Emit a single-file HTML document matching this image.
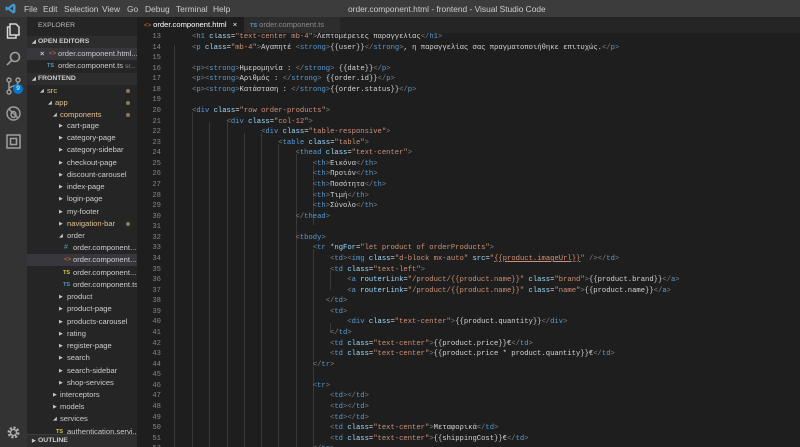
<!DOCTYPE html>
<html><head><meta charset="utf-8"><style>
*{margin:0;padding:0;box-sizing:border-box}
body{width:800px;height:447px;overflow:hidden;background:#1e1e1e;font-family:"Liberation Sans",sans-serif;position:relative}
.abs{position:absolute}
#title{left:0;top:0;width:800px;height:17px;background:#3c3c3c;color:#cccccc;font-size:8.4px}
#title span{position:absolute;top:4px}
#act{left:0;top:17px;width:27px;height:430px;background:#333333}
#side{left:27px;top:17px;width:110px;height:430px;background:#252526;color:#cccccc;font-size:7.6px}
.row{position:absolute;left:0;width:110px;height:12px;line-height:12px;white-space:nowrap;overflow:hidden}
.row span{position:absolute}
.mod{color:#e2c08d}
.dot{position:absolute;left:99px;top:4px;width:4px;height:4px;border-radius:2px;background:#8a7a5a}
.arr{font-size:5px;color:#c5c5c5}
#tabs{left:137px;top:17px;width:663px;height:16px;background:#252526}
#ed{left:137px;top:33px;width:663px;height:414px;overflow:hidden;background:#1e1e1e}
.ln{position:absolute;left:0;width:24px;text-align:right;color:#858585;font:7.2px "Liberation Mono",monospace}
.cd{position:absolute;left:55px;white-space:pre;tab-size:8;-moz-tab-size:8;color:#d4d4d4;font:7.2px "Liberation Mono","DejaVu Sans Mono",monospace}
.b{color:#808080}.n{color:#569cd6}.a{color:#9cdcfe}.s{color:#ce9178}
.g{position:absolute;width:1px;background:#3a3a3a}
</style></head><body>
<div id="title" class="abs">
<svg class="abs" style="left:5px;top:3px" width="11" height="11" viewBox="0 0 11 11"><path d="M8 0.5 L10.5 1.7 V9.3 L8 10.5 L3 6.5 L1.3 7.8 L0.5 7.3 V3.7 L1.3 3.2 L3 4.5 Z M8 3.2 L5 5.5 L8 7.8 Z" fill="#3c99d4"/></svg>
<span style="left:24px">File</span><span style="left:43px">Edit</span><span style="left:64px">Selection</span><span style="left:102px">View</span><span style="left:127px">Go</span><span style="left:145px">Debug</span><span style="left:176px">Terminal</span><span style="left:213px">Help</span>
<span style="left:348px">order.component.html - frontend - Visual Studio Code</span>
</div>
<div id="act" class="abs">
<svg class="abs" style="left:6px;top:6px" width="15" height="16" viewBox="0 0 15 16" fill="none" stroke="#d7d7d7" stroke-width="1.5"><path d="M4 1 H10 L13 4 V12 H4 Z"/><path d="M4 4 H1.5 V15 H10 V12"/></svg>
<svg class="abs" style="left:6px;top:34px" width="15" height="15" viewBox="0 0 15 15" fill="none" stroke="#a0a0a0" stroke-width="1.6"><circle cx="9" cy="6" r="4.5"/><path d="M5.8 9.2 L1 14"/></svg>
<svg class="abs" style="left:5px;top:60px" width="18" height="20" viewBox="0 0 18 20" fill="none" stroke="#a0a0a0" stroke-width="1.4"><circle cx="4" cy="3" r="2"/><circle cx="13" cy="3" r="2"/><circle cx="4" cy="15" r="2"/><path d="M4 5 V13 M13 5 C13 10 4 8 4 13"/></svg>
<div class="abs" style="left:13px;top:67px;width:10px;height:10px;border-radius:5px;background:#007acc;color:#fff;font-size:6.5px;text-align:center;line-height:10px">9</div>
<svg class="abs" style="left:6px;top:89px" width="15" height="15" viewBox="0 0 15 15" fill="none" stroke="#a0a0a0" stroke-width="1.4"><circle cx="7.5" cy="7.5" r="6.5"/><path d="M3 3 L12 12"/><ellipse cx="7.5" cy="8.5" rx="2.5" ry="3"/></svg>
<svg class="abs" style="left:6px;top:117px" width="15" height="15" viewBox="0 0 15 15" fill="none" stroke="#a0a0a0" stroke-width="1.5"><rect x="1" y="1" width="13" height="13"/><rect x="4.5" y="4.5" width="6" height="6"/></svg>
<svg class="abs" style="left:7px;top:409px" width="13" height="13" viewBox="0 0 13 13"><circle cx="6.5" cy="6.5" r="4.5" fill="none" stroke="#b0b0b0" stroke-width="3" stroke-dasharray="2 1.5"/><circle cx="6.5" cy="6.5" r="3" fill="none" stroke="#b0b0b0" stroke-width="1.3"/></svg>
</div>
<div id="side" class="abs">
<div class="row" style="top:3px"><span style="left:11px;font-size:6.8px;color:#bbbbbb">EXPLORER</span></div>
<div class="row" style="top:19px;background:#2d2d2e;font-weight:bold;font-size:6.8px"><span class="arr" style="left:5px">◢</span><span style="left:11px">OPEN EDITORS</span></div>
<div class="row" style="top:31px;background:#37373d"><span style="left:13px;font-weight:bold">×</span><span style="left:22px;color:#e37933;font-size:6px">&lt;&gt;</span><span style="left:31px">order.component.html...</span></div>
<div class="row" style="top:43px"><span style="left:20px;color:#519aba;font-size:5.5px;font-weight:bold">TS</span><span style="left:31px">order.component.ts <span style="position:static;color:#888;font-size:6.5px">sr...</span></span></div>
<div class="row" style="top:56px;background:#2d2d2e;font-weight:bold;font-size:6.8px"><span class="arr" style="left:5px">◢</span><span style="left:11px">FRONTEND</span></div>
<div class="row mod" style="top:68px"><span class="arr" style="left:13px">◢</span><span style="left:20px">src</span><i class="dot"></i></div>
<div class="row mod" style="top:80px"><span class="arr" style="left:21px">◢</span><span style="left:28px">app</span><i class="dot"></i></div>
<div class="row mod" style="top:92px"><span class="arr" style="left:26px">◢</span><span style="left:33px">components</span><i class="dot"></i></div>
<div class="row" style="top:103px"><span class="arr" style="left:32px">▶</span><span style="left:40px">cart-page</span></div>
<div class="row" style="top:115px"><span class="arr" style="left:32px">▶</span><span style="left:40px">category-page</span></div>
<div class="row" style="top:127px"><span class="arr" style="left:32px">▶</span><span style="left:40px">category-sidebar</span></div>
<div class="row" style="top:140px"><span class="arr" style="left:32px">▶</span><span style="left:40px">checkout-page</span></div>
<div class="row" style="top:152px"><span class="arr" style="left:32px">▶</span><span style="left:40px">discount-carousel</span></div>
<div class="row" style="top:164px"><span class="arr" style="left:32px">▶</span><span style="left:40px">index-page</span></div>
<div class="row" style="top:176px"><span class="arr" style="left:32px">▶</span><span style="left:40px">login-page</span></div>
<div class="row" style="top:189px"><span class="arr" style="left:32px">▶</span><span style="left:40px">my-footer</span></div>
<div class="row mod" style="top:201px"><span class="arr" style="left:32px">▶</span><span style="left:40px">navigation-bar</span><i class="dot"></i></div>
<div class="row" style="top:213px"><span class="arr" style="left:32px">◢</span><span style="left:40px">order</span></div>
<div class="row" style="top:225px"><span style="left:37px;color:#519aba;font-size:7px">#</span><span style="left:46px">order.component...</span></div>
<div class="row" style="top:237px;background:#37373d"><span style="left:37px;color:#e37933;font-size:6px">&lt;&gt;</span><span style="left:46px">order.component...</span></div>
<div class="row" style="top:250px"><span style="left:36px;color:#cbcb41;font-size:5.5px;font-weight:bold">TS</span><span style="left:46px">order.component...</span></div>
<div class="row" style="top:262px"><span style="left:36px;color:#519aba;font-size:5.5px;font-weight:bold">TS</span><span style="left:46px">order.component.ts</span></div>
<div class="row" style="top:274px"><span class="arr" style="left:32px">▶</span><span style="left:40px">product</span></div>
<div class="row" style="top:286px"><span class="arr" style="left:32px">▶</span><span style="left:40px">product-page</span></div>
<div class="row" style="top:299px"><span class="arr" style="left:32px">▶</span><span style="left:40px">products-carousel</span></div>
<div class="row" style="top:311px"><span class="arr" style="left:32px">▶</span><span style="left:40px">rating</span></div>
<div class="row" style="top:323px"><span class="arr" style="left:32px">▶</span><span style="left:40px">register-page</span></div>
<div class="row" style="top:335px"><span class="arr" style="left:32px">▶</span><span style="left:40px">search</span></div>
<div class="row" style="top:348px"><span class="arr" style="left:32px">▶</span><span style="left:40px">search-sidebar</span></div>
<div class="row" style="top:360px"><span class="arr" style="left:32px">▶</span><span style="left:40px">shop-services</span></div>
<div class="row" style="top:372px"><span class="arr" style="left:26px">▶</span><span style="left:33px">interceptors</span></div>
<div class="row" style="top:384px"><span class="arr" style="left:26px">▶</span><span style="left:33px">models</span></div>
<div class="row" style="top:396px"><span class="arr" style="left:26px">◢</span><span style="left:33px">services</span></div>
<div class="row" style="top:409px"><span style="left:29px;color:#cbcb41;font-size:5.5px;font-weight:bold">TS</span><span style="left:40px">authentication.servi...</span></div>
<div class="row" style="top:417px;height:13px;background:#2d2d2e;border-top:1px solid #3c3c3c;font-weight:bold;font-size:6.8px"><span class="arr" style="left:5px">▶</span><span style="left:11px">OUTLINE</span></div>
</div>
<div id="tabs" class="abs">
<div class="abs" style="left:0;top:0;width:107px;height:16px;background:#1e1e1e;color:#fff;font-size:7.6px;line-height:16px;white-space:nowrap"><span style="color:#e37933;font-size:6px;margin-left:7px">&lt;&gt;</span> order.component.html <span style="margin-left:4px">×</span></div>
<div class="abs" style="left:107px;top:0;width:96px;height:16px;background:#2d2d2d;color:#8a8a8a;font-size:7.6px;line-height:16px;white-space:nowrap"><span style="color:#519aba;font-size:5.5px;font-weight:bold;margin-left:6px">TS</span> order.component.ts</div>
</div>
<div id="ed" class="abs">
<div class="g" style="left:37px;top:12px;height:402px"></div>
<div class="g" style="left:55px;top:79px;height:335px"></div>
<div class="g" style="left:72px;top:89px;height:325px"></div>
<div class="g" style="left:90px;top:89px;height:325px"></div>
<div class="g" style="left:107px;top:100px;height:314px"></div>
<div class="g" style="left:124px;top:100px;height:314px"></div>
<div class="g" style="left:141px;top:111px;height:303px"></div>
<div class="g" style="left:159px;top:121px;height:293px"></div>
<div class="g" style="left:176px;top:132px;height:60px"></div>
<div class="g" style="left:176px;top:216px;height:198px"></div>
<div class="g" style="left:193px;top:237px;height:20px"></div>
<div class="g" style="left:193px;top:290px;height:10px"></div>
<div id="code"></div>
</div>
<script>
var L={
13:'<span class="b">&lt;</span><span class="n">h1</span> <span class="a">class</span>=<span class="s">"text-center mb-4"</span><span class="b">&gt;</span>Λεπτομέρειες παραγγελίας<span class="b">&lt;/</span><span class="n">h1</span><span class="b">&gt;</span>',
14:'<span class="b">&lt;</span><span class="n">p</span> <span class="a">class</span>=<span class="s">"mb-4"</span><span class="b">&gt;</span>Αγαπητέ <span class="b">&lt;</span><span class="n">strong</span><span class="b">&gt;</span>{{user}}<span class="b">&lt;/</span><span class="n">strong</span><span class="b">&gt;</span>, η παραγγελίας σας πραγματοποιήθηκε επιτυχώς.<span class="b">&lt;/</span><span class="n">p</span><span class="b">&gt;</span>',
15:'',
16:'<span class="b">&lt;</span><span class="n">p</span><span class="b">&gt;&lt;</span><span class="n">strong</span><span class="b">&gt;</span>Ημερομηνία : <span class="b">&lt;/</span><span class="n">strong</span><span class="b">&gt;</span> {{date}}<span class="b">&lt;/</span><span class="n">p</span><span class="b">&gt;</span>',
17:'<span class="b">&lt;</span><span class="n">p</span><span class="b">&gt;&lt;</span><span class="n">strong</span><span class="b">&gt;</span>Αριθμός : <span class="b">&lt;/</span><span class="n">strong</span><span class="b">&gt;</span> {{order.id}}<span class="b">&lt;/</span><span class="n">p</span><span class="b">&gt;</span>',
18:'<span class="b">&lt;</span><span class="n">p</span><span class="b">&gt;&lt;</span><span class="n">strong</span><span class="b">&gt;</span>Κατάσταση : <span class="b">&lt;/</span><span class="n">strong</span><span class="b">&gt;</span>{{order.status}}<span class="b">&lt;/</span><span class="n">p</span><span class="b">&gt;</span>',
19:'',
20:'<span class="b">&lt;</span><span class="n">div</span> <span class="a">class</span>=<span class="s">"row order-products"</span><span class="b">&gt;</span>',
21:'\t<span class="b">&lt;</span><span class="n">div</span> <span class="a">class</span>=<span class="s">"col-12"</span><span class="b">&gt;</span>',
22:'\t\t<span class="b">&lt;</span><span class="n">div</span> <span class="a">class</span>=<span class="s">"table-responsive"</span><span class="b">&gt;</span>',
23:'\t\t    <span class="b">&lt;</span><span class="n">table</span> <span class="a">class</span>=<span class="s">"table"</span><span class="b">&gt;</span>',
24:'\t\t        <span class="b">&lt;</span><span class="n">thead</span> <span class="a">class</span>=<span class="s">"text-center"</span><span class="b">&gt;</span>',
25:'\t\t            <span class="b">&lt;</span><span class="n">th</span><span class="b">&gt;</span>Εικόνα<span class="b">&lt;/</span><span class="n">th</span><span class="b">&gt;</span>',
26:'\t\t            <span class="b">&lt;</span><span class="n">th</span><span class="b">&gt;</span>Προιόν<span class="b">&lt;/</span><span class="n">th</span><span class="b">&gt;</span>',
27:'\t\t            <span class="b">&lt;</span><span class="n">th</span><span class="b">&gt;</span>Ποσότητα<span class="b">&lt;/</span><span class="n">th</span><span class="b">&gt;</span>',
28:'\t\t            <span class="b">&lt;</span><span class="n">th</span><span class="b">&gt;</span>Τιμή<span class="b">&lt;/</span><span class="n">th</span><span class="b">&gt;</span>',
29:'\t\t            <span class="b">&lt;</span><span class="n">th</span><span class="b">&gt;</span>Σύνολο<span class="b">&lt;/</span><span class="n">th</span><span class="b">&gt;</span>',
30:'\t\t        <span class="b">&lt;/</span><span class="n">thead</span><span class="b">&gt;</span>',
31:'',
32:'\t\t        <span class="b">&lt;</span><span class="n">tbody</span><span class="b">&gt;</span>',
33:'\t\t            <span class="b">&lt;</span><span class="n">tr</span> <span class="a">*ngFor</span>=<span class="s">"let product of orderProducts"</span><span class="b">&gt;</span>',
34:'\t\t                <span class="b">&lt;</span><span class="n">td</span><span class="b">&gt;&lt;</span><span class="n">img</span> <span class="a">class</span>=<span class="s">"d-block mx-auto"</span> <span class="a">src</span>=<span class="s">"<u>{{product.imageUrl}}</u>"</span> <span class="b">/&gt;&lt;/</span><span class="n">td</span><span class="b">&gt;</span>',
35:'\t\t                <span class="b">&lt;</span><span class="n">td</span> <span class="a">class</span>=<span class="s">"text-left"</span><span class="b">&gt;</span>',
36:'\t\t                    <span class="b">&lt;</span><span class="n">a</span> <span class="a">routerLink</span>=<span class="s">"/product/{{product.name}}"</span> <span class="a">class</span>=<span class="s">"brand"</span><span class="b">&gt;</span>{{product.brand}}<span class="b">&lt;/</span><span class="n">a</span><span class="b">&gt;</span>',
37:'\t\t                    <span class="b">&lt;</span><span class="n">a</span> <span class="a">routerLink</span>=<span class="s">"/product/{{product.name}}"</span> <span class="a">class</span>=<span class="s">"name"</span><span class="b">&gt;</span>{{product.name}}<span class="b">&lt;/</span><span class="n">a</span><span class="b">&gt;</span>',
38:'\t\t               <span class="b">&lt;/</span><span class="n">td</span><span class="b">&gt;</span>',
39:'\t\t                <span class="b">&lt;</span><span class="n">td</span><span class="b">&gt;</span>',
40:'\t\t                    <span class="b">&lt;</span><span class="n">div</span> <span class="a">class</span>=<span class="s">"text-center"</span><span class="b">&gt;</span>{{product.quantity}}<span class="b">&lt;/</span><span class="n">div</span><span class="b">&gt;</span>',
41:'\t\t                <span class="b">&lt;/</span><span class="n">td</span><span class="b">&gt;</span>',
42:'\t\t                <span class="b">&lt;</span><span class="n">td</span> <span class="a">class</span>=<span class="s">"text-center"</span><span class="b">&gt;</span>{{product.price}}€<span class="b">&lt;/</span><span class="n">td</span><span class="b">&gt;</span>',
43:'\t\t                <span class="b">&lt;</span><span class="n">td</span> <span class="a">class</span>=<span class="s">"text-center"</span><span class="b">&gt;</span>{{product.price * product.quantity}}€<span class="b">&lt;/</span><span class="n">td</span><span class="b">&gt;</span>',
44:'\t\t            <span class="b">&lt;/</span><span class="n">tr</span><span class="b">&gt;</span>',
45:'',
46:'\t\t            <span class="b">&lt;</span><span class="n">tr</span><span class="b">&gt;</span>',
47:'\t\t                <span class="b">&lt;</span><span class="n">td</span><span class="b">&gt;&lt;/</span><span class="n">td</span><span class="b">&gt;</span>',
48:'\t\t                <span class="b">&lt;</span><span class="n">td</span><span class="b">&gt;&lt;/</span><span class="n">td</span><span class="b">&gt;</span>',
49:'\t\t                <span class="b">&lt;</span><span class="n">td</span><span class="b">&gt;&lt;/</span><span class="n">td</span><span class="b">&gt;</span>',
50:'\t\t                <span class="b">&lt;</span><span class="n">td</span> <span class="a">class</span>=<span class="s">"text-center"</span><span class="b">&gt;</span>Μεταφορικά<span class="b">&lt;/</span><span class="n">td</span><span class="b">&gt;</span>',
51:'\t\t                <span class="b">&lt;</span><span class="n">td</span> <span class="a">class</span>=<span class="s">"text-center"</span><span class="b">&gt;</span>{{shippingCost}}€<span class="b">&lt;/</span><span class="n">td</span><span class="b">&gt;</span>',
52:'\t\t            <span class="b">&lt;/</span><span class="n">tr</span><span class="b">&gt;</span>'
};
var h='';
for(var n=13;n<=52;n++){var t=5+(n-13)*10.57-5;
h+='<div class="ln" style="top:'+t.toFixed(2)+'px">'+n+'</div><div class="cd" style="top:'+t.toFixed(2)+'px">'+L[n]+'</div>';}
document.getElementById('code').innerHTML=h;
</script>
</body></html>
